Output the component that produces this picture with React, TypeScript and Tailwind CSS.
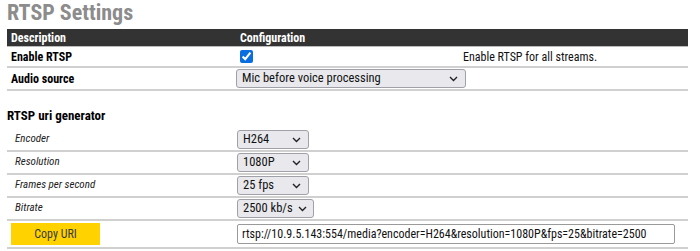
import React from "react";

const FONT = "font-['Roboto',sans-serif] font-stretch-condensed";

const Chevron = () => (
  <svg width="9" height="6" viewBox="0 0 9 6" className="shrink-0">
    <path d="M1 1l3.5 3.5L8 1" fill="none" stroke="#222" strokeWidth="1.4" />
  </svg>
);

const FakeSelect = ({ value, width }: { value: string; width: string }) => (
  <div
    className={`${width} h-[19px] flex items-center justify-between gap-[5px] pl-[5px] pr-[7px] bg-[#e9e9ed] border border-[#a0a0a8] rounded-[3px] text-[12.5px] text-[#111] whitespace-nowrap`}
  >
    <span>{value}</span>
    <Chevron />
  </div>
);

const GEN_ROWS = [
  { label: "Encoder", value: "H264", width: "w-[72px]" },
  { label: "Resolution", value: "1080P", width: "w-[72px]" },
  { label: "Frames per second", value: "25 fps", width: "w-[72px]" },
  { label: "Bitrate", value: "2500 kb/s", width: "w-[77px]" },
];

export default function App() {
  return (
    <div className={`${FONT} w-[700px] h-[251px] bg-white pl-[7px] pr-[12px] overflow-hidden`}>
      <h1 className="text-[22px] font-bold text-[#8c8c8c] leading-[24px] pt-[1px] h-[29px]">RTSP Settings</h1>

      {/* settings table */}
      <div className="grid grid-cols-[230px_1fr] h-[18px] bg-[#333] border-b border-[#bbb] text-white text-[12px] font-bold items-center">
        <div className="pl-[4px]">Description</div>
        <div className="pl-[3px]">Configuration</div>
      </div>
      <div className="grid grid-cols-[230px_223px_1fr] h-[21px] border-b-2 border-[#d0d0d0] items-center text-[12px]">
        <div className="pl-[4px] font-bold text-black">Enable RTSP</div>
        <div className="pl-[3px] flex items-center">
          <input type="checkbox" checked readOnly className="w-[13px] h-[13px] accent-[#0a6de0]" />
        </div>
        <div className="text-[#111] pl-[3px]">Enable RTSP for all streams.</div>
      </div>
      <div className="grid grid-cols-[229px_1fr] h-[23px] border-b-2 border-[#d0d0d0] items-center text-[12px]">
        <div className="pl-[4px] font-bold text-black">Audio source</div>
        <FakeSelect value="Mic before voice processing" width="w-[230px]" />
      </div>

      <h2 className="text-[13px] font-bold text-black mt-[17px] leading-[16px]">RTSP uri generator</h2>

      <div className="mt-[5px]">
        {GEN_ROWS.map((r) => (
          <div key={r.label} className="grid grid-cols-[230px_1fr] h-[23px] border-b-2 border-[#d0d0d0] items-center">
            <div className="pl-[8px] italic text-[11px] text-[#222]">{r.label}</div>
            <FakeSelect value={r.value} width={r.width} />
          </div>
        ))}
        <div className="grid grid-cols-[230px_1fr] h-[28px] border-b-2 border-[#d0d0d0] items-center">
          <div className="pl-[4px]">
            <button className="w-[89px] h-[22px] bg-[#ffd200] text-[12px] text-[#3a3a3a] flex items-center justify-center">
              Copy URI
            </button>
          </div>
          <div className="w-[438px] h-[20px] border border-[#9a9a9a] rounded-[2px] flex items-center pl-[4px] text-[12px] text-[#111] whitespace-nowrap">
            rtsp://10.9.5.143:554/media?encoder=H264&amp;resolution=1080P&amp;fps=25&amp;bitrate=2500
          </div>
        </div>
      </div>
    </div>
  );
}
